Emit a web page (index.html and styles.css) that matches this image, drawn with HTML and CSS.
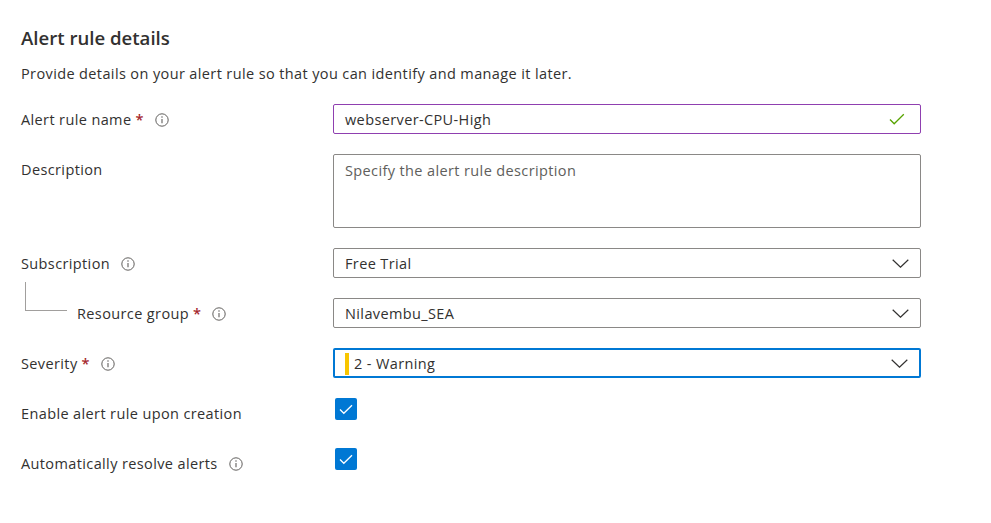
FILE: index.html
```html
<!DOCTYPE html>
<html lang="en">
<head>
<meta charset="utf-8">
<title>Alert rule details</title>
<link rel="stylesheet" href="styles.css">
</head>
<body>
<div class="page">
  <h2 class="title">Alert rule details</h2>
  <p class="intro">Provide details on your alert rule so that you can identify and manage it later.</p>

  <div class="form">
    <div class="row">
      <div class="label">Alert rule name<span class="req">*</span>
        <svg class="info" width="14" height="14" viewBox="0 0 14 14"><circle cx="7" cy="7" r="6.2" fill="none" stroke="#605e5c" stroke-width="1"/><line x1="7" y1="6" x2="7" y2="10.2" stroke="#605e5c" stroke-width="1.1"/><circle cx="7" cy="4.1" r="0.75" fill="#605e5c"/></svg>
      </div>
      <div class="field">
        <div class="input valid">
          <span class="value">webserver-CPU-High</span>
          <svg class="ok" width="16" height="13" viewBox="0 0 16 13"><polyline points="1,6.5 5.2,10.8 14.8,1.2" fill="none" stroke="#57a300" stroke-width="1.3"/></svg>
        </div>
      </div>
    </div>

    <div class="row">
      <div class="label">Description</div>
      <div class="field">
        <div class="textarea"><span class="placeholder">Specify the alert rule description</span></div>
      </div>
    </div>

    <div class="row">
      <div class="label">Subscription
        <svg class="info" width="14" height="14" viewBox="0 0 14 14"><circle cx="7" cy="7" r="6.2" fill="none" stroke="#605e5c" stroke-width="1"/><line x1="7" y1="6" x2="7" y2="10.2" stroke="#605e5c" stroke-width="1.1"/><circle cx="7" cy="4.1" r="0.75" fill="#605e5c"/></svg>
      </div>
      <div class="field">
        <div class="input select">
          <span class="value">Free Trial</span>
          <svg class="chev" width="17" height="9" viewBox="0 0 17 9"><polyline points="0.7,0.7 8.5,8.2 16.3,0.7" fill="none" stroke="#323130" stroke-width="1.2"/></svg>
        </div>
      </div>
    </div>

    <div class="row">
      <div class="label child">Resource group<span class="req">*</span>
        <svg class="info" width="14" height="14" viewBox="0 0 14 14"><circle cx="7" cy="7" r="6.2" fill="none" stroke="#605e5c" stroke-width="1"/><line x1="7" y1="6" x2="7" y2="10.2" stroke="#605e5c" stroke-width="1.1"/><circle cx="7" cy="4.1" r="0.75" fill="#605e5c"/></svg>
      </div>
      <div class="field">
        <div class="input select">
          <span class="value">Nilavembu_SEA</span>
          <svg class="chev" width="17" height="9" viewBox="0 0 17 9"><polyline points="0.7,0.7 8.5,8.2 16.3,0.7" fill="none" stroke="#323130" stroke-width="1.2"/></svg>
        </div>
      </div>
    </div>

    <div class="row">
      <div class="label">Severity<span class="req">*</span>
        <svg class="info" width="14" height="14" viewBox="0 0 14 14"><circle cx="7" cy="7" r="6.2" fill="none" stroke="#605e5c" stroke-width="1"/><line x1="7" y1="6" x2="7" y2="10.2" stroke="#605e5c" stroke-width="1.1"/><circle cx="7" cy="4.1" r="0.75" fill="#605e5c"/></svg>
      </div>
      <div class="field">
        <div class="input select focused">
          <span class="sev-bar"></span>
          <span class="value">2 - Warning</span>
          <svg class="chev" width="17" height="9" viewBox="0 0 17 9"><polyline points="0.7,0.7 8.5,8.2 16.3,0.7" fill="none" stroke="#323130" stroke-width="1.2"/></svg>
        </div>
      </div>
    </div>

    <div class="row">
      <div class="label">Enable alert rule upon creation</div>
      <div class="field">
        <span class="checkbox"><svg width="14" height="11" viewBox="0 0 14 11"><polyline points="1,5.5 4.8,9.3 13,1.2" fill="none" stroke="#fff" stroke-width="1.3"/></svg></span>
      </div>
    </div>

    <div class="row">
      <div class="label">Automatically resolve alerts
        <svg class="info" width="14" height="14" viewBox="0 0 14 14"><circle cx="7" cy="7" r="6.2" fill="none" stroke="#605e5c" stroke-width="1"/><line x1="7" y1="6" x2="7" y2="10.2" stroke="#605e5c" stroke-width="1.1"/><circle cx="7" cy="4.1" r="0.75" fill="#605e5c"/></svg>
      </div>
      <div class="field">
        <span class="checkbox"><svg width="14" height="11" viewBox="0 0 14 11"><polyline points="1,5.5 4.8,9.3 13,1.2" fill="none" stroke="#fff" stroke-width="1.3"/></svg></span>
      </div>
    </div>
  </div>
</div>
</body>
</html>
```

FILE: styles.css
```css
html, body {
  margin: 0;
  padding: 0;
  background: #ffffff;
}

body {
  font-family: "Open Sans", "Noto Sans", sans-serif;
  font-size: 14.5px;
  letter-spacing: 0.38px;
  color: #323130;
}

.page {
  padding: 24px 0 0 21px;
}

.title {
  margin: 0;
  font-size: 18.6px;
  line-height: 28px;
  font-weight: 600;
  letter-spacing: 0;
  color: #323130;
}

.intro {
  margin: 12px 0 0 0;
  line-height: 20px;
}

.form {
  margin-top: 20px;
  display: flex;
  flex-direction: column;
  gap: 20px;
}

.row {
  display: grid;
  grid-template-columns: 312px 588px;
}

.label {
  display: flex;
  align-items: center;
  height: 30px;
  padding-top: 1px;
  box-sizing: border-box;
  line-height: 20px;
  white-space: nowrap;
  position: relative;
}

.label.child {
  padding-left: 56px;
}

.label.child::before {
  content: "";
  position: absolute;
  left: 4px;
  top: -16px;
  width: 41px;
  height: 28px;
  border-left: 1px solid #a19f9d;
  border-bottom: 1px solid #a19f9d;
}

.req {
  color: #a4262c;
  margin-left: 4px;
  font-weight: 600;
}

.info {
  margin-left: 11px;
  flex: none;
}

.input {
  box-sizing: border-box;
  height: 30px;
  border: 1px solid #8a8886;
  border-radius: 2px;
  display: flex;
  align-items: center;
  padding: 1px 10px 0 11px;
}

.input .value {
  flex: 1;
  line-height: 20px;
}

.input.valid {
  border-color: #8f3fb0;
}

.input.focused {
  border: 2px solid #0078d4;
  padding-left: 10px;
}

.sev-bar {
  width: 4px;
  height: 22px;
  background: #f8c600;
  margin-right: 5px;
  flex: none;
}

.ok {
  margin-right: 5px;
}

.chev {
  margin-right: 1px;
}

.textarea {
  box-sizing: border-box;
  height: 74px;
  border: 1px solid #8a8886;
  border-radius: 2px;
  padding: 6px 11px;
  line-height: 20px;
}

.placeholder {
  color: #605e5c;
}

.checkbox {
  display: flex;
  align-items: center;
  justify-content: center;
  width: 22px;
  height: 22px;
  margin-left: 2px;
  background: #0078d4;
  border-radius: 2px;
}
```
